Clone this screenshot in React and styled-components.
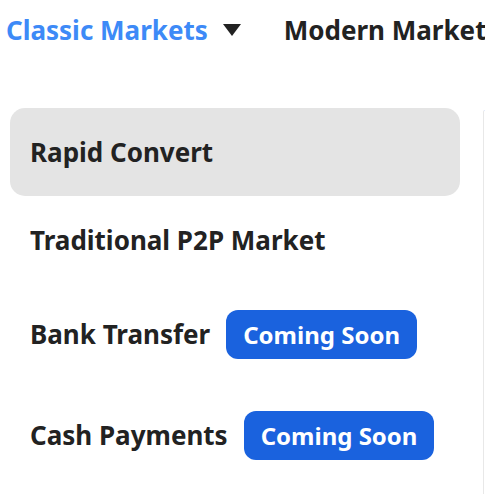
import React from 'react';
import styled, { createGlobalStyle } from 'styled-components';

const GlobalStyle = createGlobalStyle`
  html, body {
    margin: 0;
    padding: 0;
    background: #fff;
    overflow: hidden;
  }
  body {
    font-family: 'Noto Sans', 'Open Sans', sans-serif;
    color: #222;
  }
`;

const Page = styled.div`
  width: 485px;
  height: 494px;
  overflow: hidden;
  display: flex;
  flex-direction: column;
`;

const TopNav = styled.nav`
  display: flex;
  align-items: center;
  height: 60px;
  padding-left: 6px;
  white-space: nowrap;
`;

const NavTab = styled.div`
  display: flex;
  align-items: center;
  gap: 15px;
  font-size: 26px;
  font-weight: 700;
  color: ${(p) => (p.active ? '#3d8af7' : '#222')};
  margin-right: ${(p) => (p.active ? '43px' : '0')};
`;

const Caret = styled.span`
  width: 0;
  height: 0;
  border-left: 9px solid transparent;
  border-right: 9px solid transparent;
  border-top: 12px solid #222;
`;

const Body = styled.div`
  display: flex;
  flex: 1;
  padding-top: 48px;
`;

const Menu = styled.ul`
  list-style: none;
  margin: 0 0 0 10px;
  padding: 0;
  width: 450px;
  display: flex;
  flex-direction: column;
`;

const MenuItem = styled.li`
  display: flex;
  align-items: center;
  gap: 16px;
  height: ${(p) => p.height}px;
  padding-left: 20px;
  border-radius: 15px;
  background: ${(p) => (p.selected ? '#e4e4e4' : 'transparent')};
  font-size: 26px;
  font-weight: 700;
  color: #222;
  white-space: nowrap;
`;

const Badge = styled.span`
  display: inline-flex;
  align-items: center;
  height: 49px;
  padding: 0 17px;
  border-radius: 12px;
  background: #1a62de;
  color: #fff;
  font-size: 24px;
  font-weight: 700;
`;

const SidePanel = styled.div`
  margin-left: 23px;
  margin-top: 2px;
  flex: 1;
  border-left: 1px solid #e8e8e8;
  border-top: 1px solid #dfe8fa;
  border-top-left-radius: 4px;
`;

const items = [
  { label: 'Rapid Convert', selected: true, height: 88 },
  { label: 'Traditional P2P Market', height: 88 },
  { label: 'Bank Transfer', soon: true, height: 100 },
  { label: 'Cash Payments', soon: true, height: 102 },
];

export default function App() {
  return (
    <Page>
      <GlobalStyle />
      <TopNav>
        <NavTab active>
          Classic Markets
          <Caret />
        </NavTab>
        <NavTab>Modern Market</NavTab>
      </TopNav>
      <Body>
        <Menu>
          {items.map((item) => (
            <MenuItem key={item.label} selected={item.selected} height={item.height}>
              {item.label}
              {item.soon && <Badge>Coming Soon</Badge>}
            </MenuItem>
          ))}
        </Menu>
        <SidePanel />
      </Body>
    </Page>
  );
}
